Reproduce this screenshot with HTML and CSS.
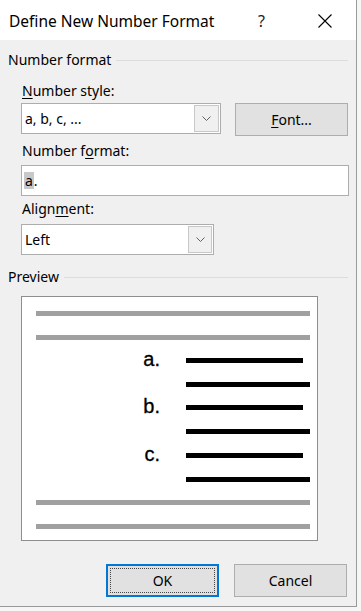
FILE: index.html
```html
<!DOCTYPE html>
<html>
	<head>
		<meta charset="UTF-8">
		<title>Define New Number Format</title>
		<link rel="stylesheet" href="styles.css">
	</head>
	<body>
		<div class="dialog">
			<div class="titlebar">
				<span class="title">Define New Number Format</span>
				<span class="help">?</span>
				<span class="close">
					<svg width="14" height="14" viewBox="0 0 14 14"><path d="M0.5 0.5L13.5 13.5M13.5 0.5L0.5 13.5" stroke="#000" stroke-width="1.1" fill="none"/></svg>
				</span>
			</div>
			<div class="content">
				<div class="group-head first"><span>Number format</span></div>

				<div class="label lbl-style"><u>N</u>umber style:</div>
				<div class="style-row">
					<div class="select select-style">
						<span class="value">a, b, c, ...</span>
						<span class="drop"><svg width="9" height="5" viewBox="0 0 9 5"><path d="M0.5 0.5L4.5 4.5L8.5 0.5" stroke="#606060" fill="none"/></svg></span>
					</div>
					<div class="btn font-btn"><u>F</u>ont...</div>
				</div>

				<div class="label lbl-format">Number f<u>o</u>rmat:</div>
				<div class="input"><span class="sel">a</span>.</div>

				<div class="label lbl-align">Align<u>m</u>ent:</div>
				<div class="select select-align">
					<span class="value">Left</span>
					<span class="drop"><svg width="9" height="5" viewBox="0 0 9 5"><path d="M0.5 0.5L4.5 4.5L8.5 0.5" stroke="#606060" fill="none"/></svg></span>
				</div>

				<div class="group-head preview-head"><span>Preview</span></div>
				<div class="preview">
					<div class="pl gray"></div>
					<div class="pl gray"></div>
					<div class="pl item t"><span class="num">a.</span><span class="bar short"></span></div>
					<div class="pl black"></div>
					<div class="pl item t"><span class="num">b.</span><span class="bar short"></span></div>
					<div class="pl black"></div>
					<div class="pl item"><span class="num">c.</span><span class="bar short"></span></div>
					<div class="pl black"></div>
					<div class="pl gray t"></div>
					<div class="pl gray"></div>
				</div>

				<div class="actions">
					<div class="btn ok"><span class="focus">OK</span></div>
					<div class="btn">Cancel</div>
				</div>
			</div>
		</div>
	</body>
</html>
```

FILE: styles.css
```css
* {
	padding: 0;
	margin: 0;
	box-sizing: border-box;
}
body {
	background: #f6f6f6;
	font-family: "Noto Sans", "Open Sans", sans-serif;
	font-size: 14px;
	color: #000;
}
u {
	text-decoration: underline;
	text-underline-offset: 2px;
}
.dialog {
	width: 357px;
	height: 607px;
	background: #f0f0f0;
	border-right: 1px solid #9a9a9a;
	border-bottom: 1px solid #9a9a9a;
}
.titlebar {
	height: 40px;
	background: #fff;
	display: flex;
	align-items: center;
	padding-top: 1px;
}
.title {
	font-size: 15.5px;
	padding-left: 9px;
}
.help {
	margin-left: auto;
	font-size: 16px;
	color: #222;
}
.close {
	display: flex;
	margin-left: 53px;
	margin-right: 24px;
}
.content {
	padding: 0 8px 0 21px;
}
.group-head {
	display: flex;
	align-items: center;
	height: 20px;
	margin-left: -13px;
	line-height: 20px;
}
.group-head::after {
	content: "";
	flex: 1;
	height: 1px;
	background: #dcdcdc;
	margin-left: 5px;
}
.group-head.first {
	margin-top: 10px;
}
.label {
	height: 20px;
	line-height: 20px;
	padding-left: 1px;
}
.lbl-style {
	margin-top: 11px;
}
.style-row {
	display: flex;
	align-items: flex-start;
	margin-top: 2px;
}
.select {
	display: flex;
	align-items: stretch;
	height: 31px;
	background: #fff;
	border: 1px solid #adadad;
	padding: 1px;
}
.select .value {
	flex: 1;
	display: flex;
	align-items: center;
	padding-left: 2px;
}
.select .drop {
	width: 25px;
	display: flex;
	align-items: center;
	justify-content: center;
	background: #f0f0f0;
	border: 1px solid #c8c8c8;
}
.select-style {
	width: 200px;
}
.select-align {
	width: 193px;
	margin-top: 5px;
}
.select-align .drop {
	width: 24px;
}
.btn {
	display: flex;
	align-items: center;
	justify-content: center;
	width: 113px;
	height: 33px;
	background: #e1e1e1;
	border: 1px solid #adadad;
}
.font-btn {
	margin-left: 14px;
}
.lbl-format {
	margin-top: 5px;
}
.input {
	height: 31px;
	width: 328px;
	margin-top: 4px;
	background: #fff;
	border: 1px solid #adadad;
	display: flex;
	align-items: center;
	padding-left: 2px;
}
.input .sel {
	background: #c8c8c8;
	padding: 0 1px;
	line-height: 17px;
}
.lbl-align {
	margin-top: 3px;
}
.preview-head {
	margin-top: 12px;
}
.preview {
	width: 297px;
	height: 245px;
	margin-top: 9px;
	background: #fff;
	border: 1px solid #8e8e8e;
	padding-top: 14px;
	display: flex;
	flex-direction: column;
}
.pl {
	height: 5px;
	flex-shrink: 0;
}
.pl + .pl {
	margin-top: 19px;
}
.pl + .pl.t {
	margin-top: 18px;
}
.pl.gray {
	margin-left: 14px;
	width: 274px;
	background: #a0a0a0;
}
.pl.black {
	margin-left: 164px;
	width: 124px;
	background: #000;
}
.pl.item {
	display: flex;
	align-items: center;
}
.num {
	width: 138px;
	text-align: right;
	font-family: "Liberation Sans", Arial, sans-serif;
	font-size: 20px;
	line-height: 20px;
	padding-bottom: 4px;
	-webkit-text-stroke: 0.3px #000;
}
.bar.short {
	display: block;
	margin-left: 26px;
	width: 117px;
	height: 5px;
	background: #000;
}
.actions {
	display: flex;
	justify-content: flex-end;
	margin-top: 23px;
	margin-right: 1px;
}
.actions .btn + .btn {
	margin-left: 15px;
}
.btn.ok {
	border: 2px solid #0078d7;
	padding: 2px;
}
.ok .focus {
	flex: 1;
	align-self: stretch;
	display: flex;
	align-items: center;
	justify-content: center;
	border: 1px dotted #444;
}
```
